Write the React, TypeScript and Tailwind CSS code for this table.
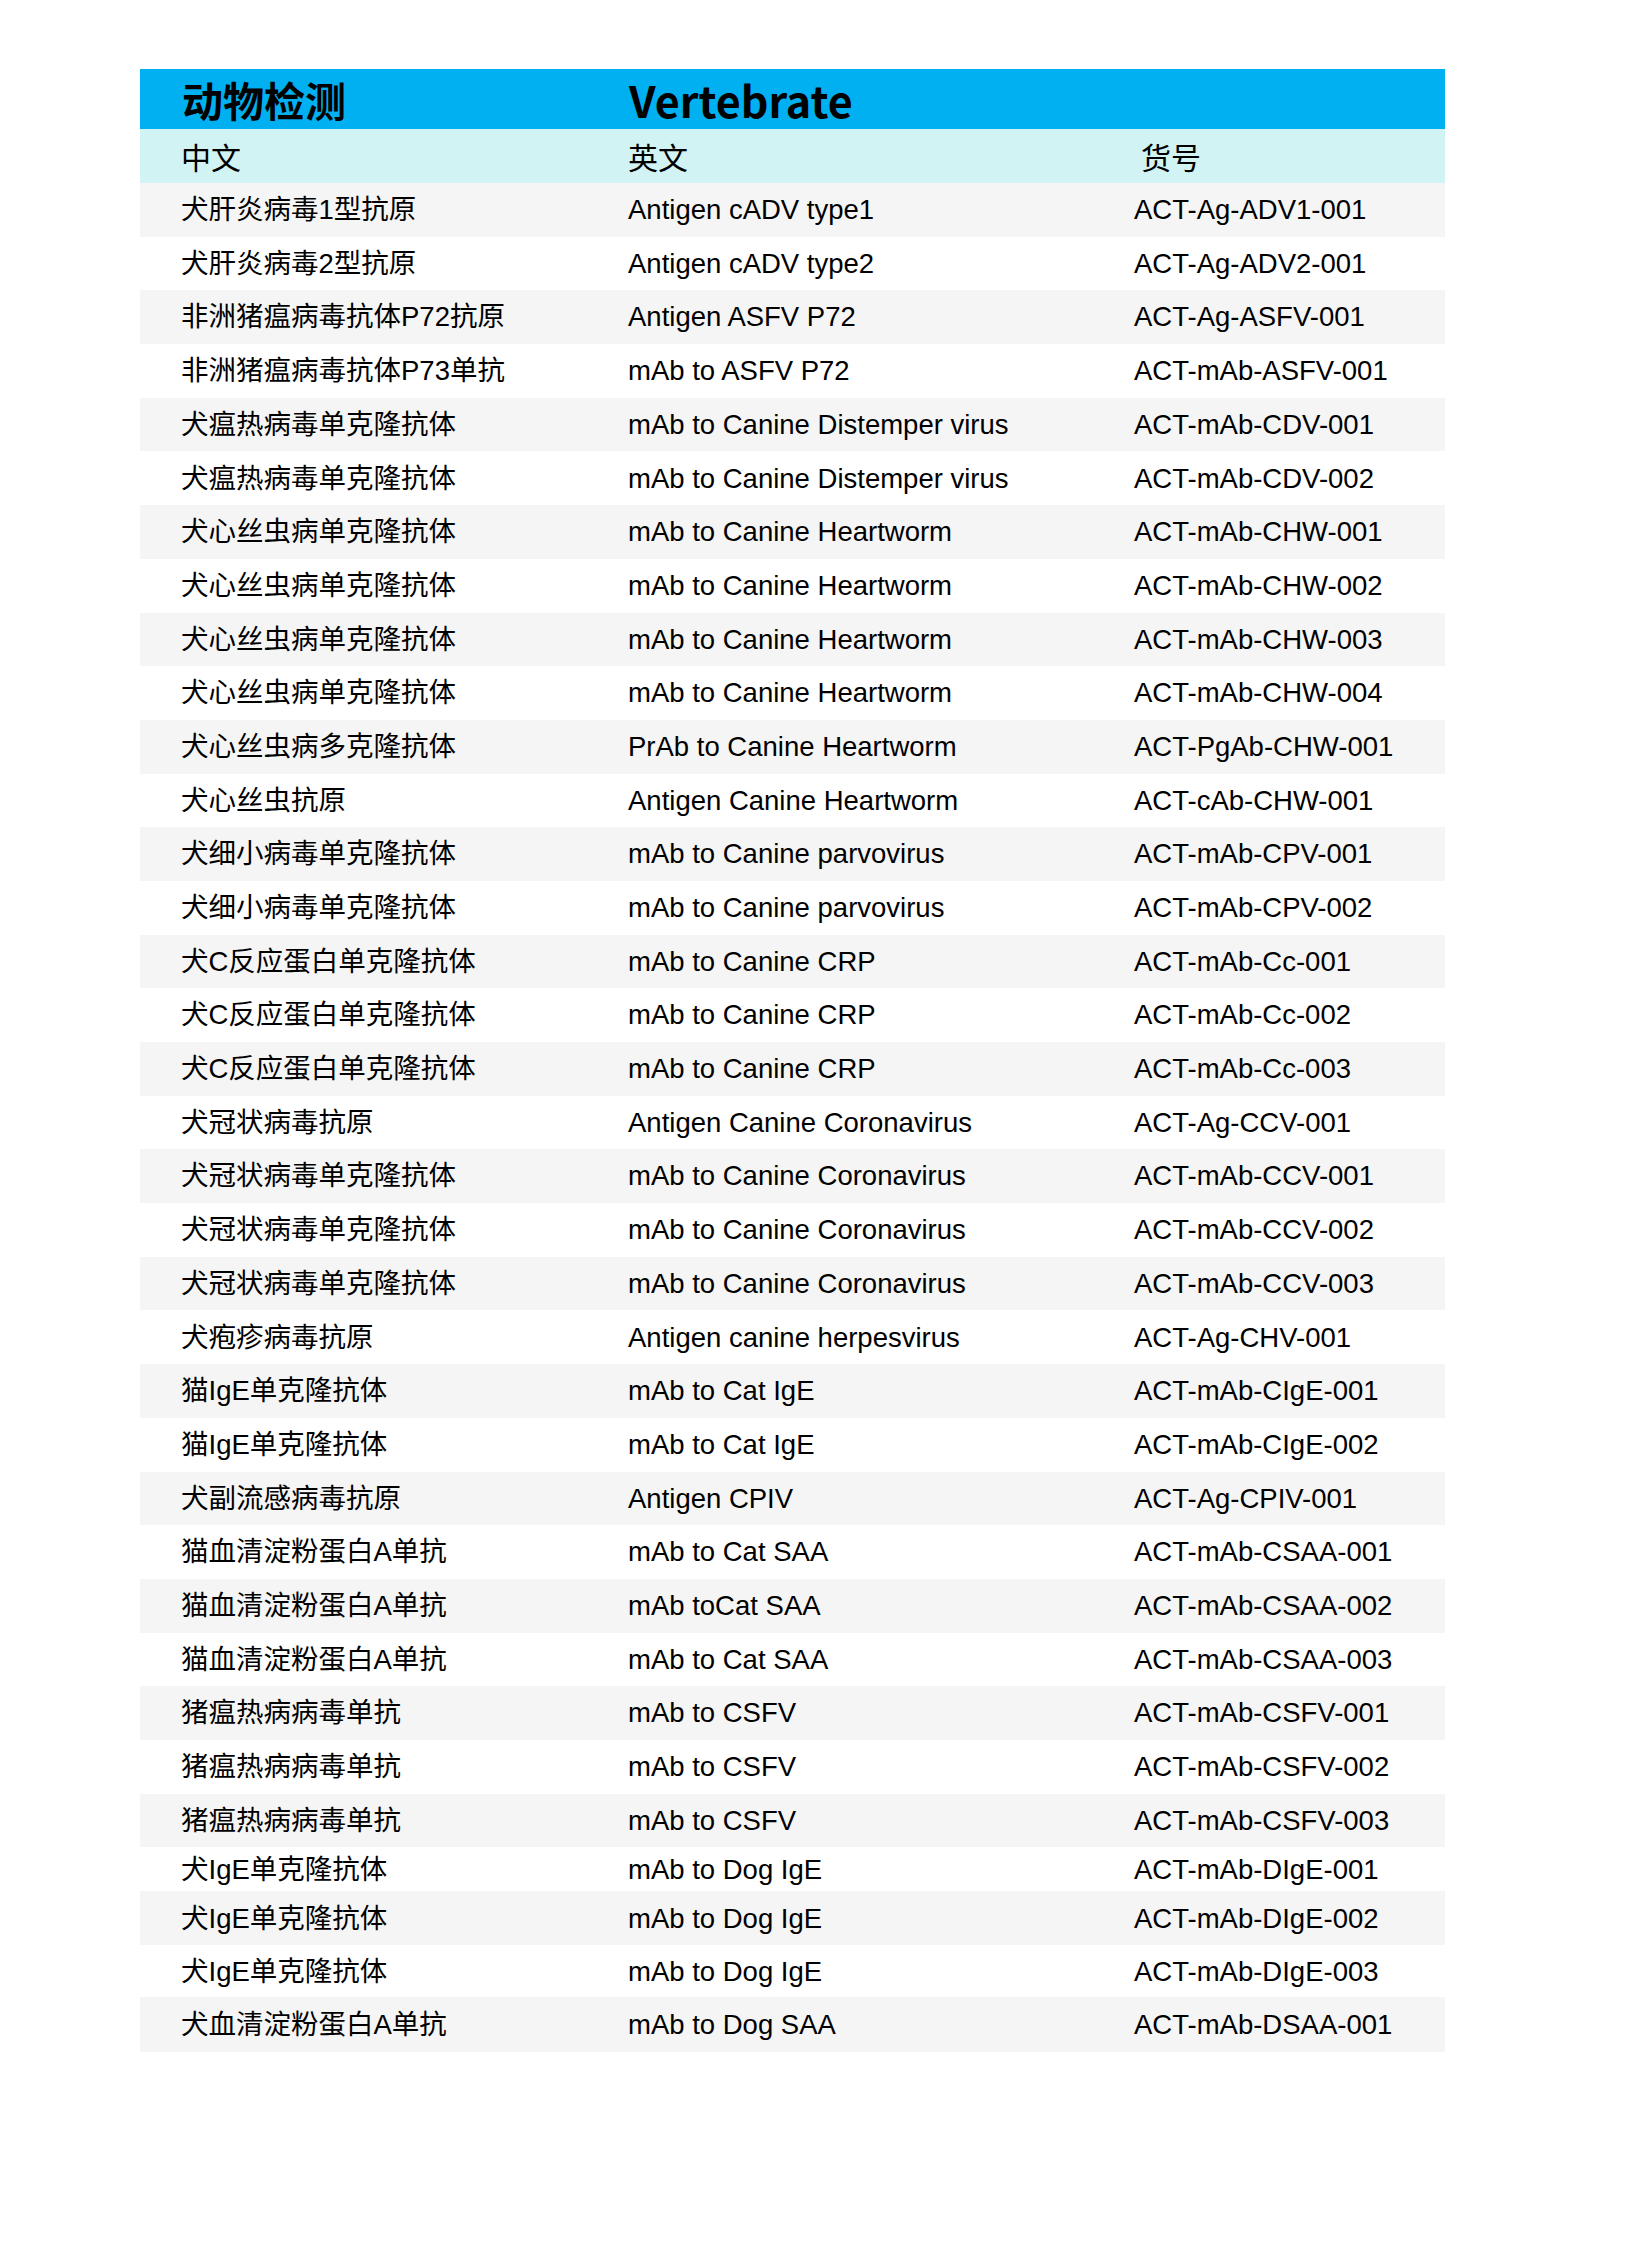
import React from 'react';

type Row = { zh: string; en: string; code: string; h?: string };

const ROWS: Row[] = [
  { zh: '犬肝炎病毒1型抗原', en: 'Antigen cADV type1', code: 'ACT-Ag-ADV1-001' },
  { zh: '犬肝炎病毒2型抗原', en: 'Antigen cADV type2', code: 'ACT-Ag-ADV2-001' },
  { zh: '非洲猪瘟病毒抗体P72抗原', en: 'Antigen ASFV P72', code: 'ACT-Ag-ASFV-001' },
  { zh: '非洲猪瘟病毒抗体P73单抗', en: 'mAb to ASFV P72', code: 'ACT-mAb-ASFV-001' },
  { zh: '犬瘟热病毒单克隆抗体', en: 'mAb to Canine Distemper virus', code: 'ACT-mAb-CDV-001' },
  { zh: '犬瘟热病毒单克隆抗体', en: 'mAb to Canine Distemper virus', code: 'ACT-mAb-CDV-002' },
  { zh: '犬心丝虫病单克隆抗体', en: 'mAb to Canine Heartworm', code: 'ACT-mAb-CHW-001' },
  { zh: '犬心丝虫病单克隆抗体', en: 'mAb to Canine Heartworm', code: 'ACT-mAb-CHW-002' },
  { zh: '犬心丝虫病单克隆抗体', en: 'mAb to Canine Heartworm', code: 'ACT-mAb-CHW-003' },
  { zh: '犬心丝虫病单克隆抗体', en: 'mAb to Canine Heartworm', code: 'ACT-mAb-CHW-004' },
  { zh: '犬心丝虫病多克隆抗体', en: 'PrAb to Canine Heartworm', code: 'ACT-PgAb-CHW-001' },
  { zh: '犬心丝虫抗原', en: 'Antigen Canine Heartworm', code: 'ACT-cAb-CHW-001' },
  { zh: '犬细小病毒单克隆抗体', en: 'mAb to Canine parvovirus', code: 'ACT-mAb-CPV-001' },
  { zh: '犬细小病毒单克隆抗体', en: 'mAb to Canine parvovirus', code: 'ACT-mAb-CPV-002' },
  { zh: '犬C反应蛋白单克隆抗体', en: 'mAb to Canine CRP', code: 'ACT-mAb-Cc-001' },
  { zh: '犬C反应蛋白单克隆抗体', en: 'mAb to Canine CRP', code: 'ACT-mAb-Cc-002' },
  { zh: '犬C反应蛋白单克隆抗体', en: 'mAb to Canine CRP', code: 'ACT-mAb-Cc-003' },
  { zh: '犬冠状病毒抗原', en: 'Antigen Canine Coronavirus', code: 'ACT-Ag-CCV-001' },
  { zh: '犬冠状病毒单克隆抗体', en: 'mAb to Canine Coronavirus', code: 'ACT-mAb-CCV-001' },
  { zh: '犬冠状病毒单克隆抗体', en: 'mAb to Canine Coronavirus', code: 'ACT-mAb-CCV-002' },
  { zh: '犬冠状病毒单克隆抗体', en: 'mAb to Canine Coronavirus', code: 'ACT-mAb-CCV-003' },
  { zh: '犬疱疹病毒抗原', en: 'Antigen canine herpesvirus', code: 'ACT-Ag-CHV-001' },
  { zh: '猫IgE单克隆抗体', en: 'mAb to Cat IgE', code: 'ACT-mAb-CIgE-001' },
  { zh: '猫IgE单克隆抗体', en: 'mAb to Cat IgE', code: 'ACT-mAb-CIgE-002' },
  { zh: '犬副流感病毒抗原', en: 'Antigen CPIV', code: 'ACT-Ag-CPIV-001' },
  { zh: '猫血清淀粉蛋白A单抗', en: 'mAb to Cat SAA', code: 'ACT-mAb-CSAA-001' },
  { zh: '猫血清淀粉蛋白A单抗', en: 'mAb toCat SAA', code: 'ACT-mAb-CSAA-002' },
  { zh: '猫血清淀粉蛋白A单抗', en: 'mAb to Cat SAA', code: 'ACT-mAb-CSAA-003' },
  { zh: '猪瘟热病病毒单抗', en: 'mAb to CSFV', code: 'ACT-mAb-CSFV-001' },
  { zh: '猪瘟热病病毒单抗', en: 'mAb to CSFV', code: 'ACT-mAb-CSFV-002' },
  { zh: '猪瘟热病病毒单抗', en: 'mAb to CSFV', code: 'ACT-mAb-CSFV-003' },
  { zh: '犬IgE单克隆抗体', en: 'mAb to Dog IgE', code: 'ACT-mAb-DIgE-001', h: 'h-[44px]' },
  { zh: '犬IgE单克隆抗体', en: 'mAb to Dog IgE', code: 'ACT-mAb-DIgE-002', h: 'h-[54px]' },
  { zh: '犬IgE单克隆抗体', en: 'mAb to Dog IgE', code: 'ACT-mAb-DIgE-003', h: 'h-[52px]' },
  { zh: '犬血清淀粉蛋白A单抗', en: 'mAb to Dog SAA', code: 'ACT-mAb-DSAA-001', h: 'h-[55px]' },
];

const App: React.FC = () => {
  return (
    <div className="min-h-[2254px] w-full bg-white pt-[69px] text-black font-['Liberation_Sans','Noto_Sans_CJK_SC',sans-serif]">
      <div className="ml-[140px] w-[1305px]">
        {/* Title bar */}
        <div className="grid h-[60px] grid-cols-[447px_506px_1fr] items-center bg-[#00b0f0] pl-[42px] font-['Noto_Sans_CJK_SC',sans-serif] font-bold">
          <span className="text-[41px] leading-none">动物检测</span>
          <span className="text-[43px] leading-none">Vertebrate</span>
          <span />
        </div>

        {/* Column heads */}
        <div className="grid h-[54px] grid-cols-[447px_506px_1fr] items-center bg-[#d2f3f3] pl-[41px] font-['Noto_Sans_CJK_SC',sans-serif] text-[30px] leading-none">
          <span>中文</span>
          <span>英文</span>
          <span className="pl-[7px]">货号</span>
        </div>

        {ROWS.map((r, i) => (
          <div
            key={i}
            className={`grid grid-cols-[447px_506px_1fr] items-center pl-[41px] leading-none ${r.h ?? 'h-[53.7px]'} ${
              i % 2 === 0 ? 'bg-[#f5f5f5]' : 'bg-white'
            }`}
          >
            <span className="whitespace-nowrap text-[27.5px]">{r.zh}</span>
            <span className="whitespace-nowrap text-[27.5px]">{r.en}</span>
            <span className="whitespace-nowrap text-[27.5px]">{r.code}</span>
          </div>
        ))}
      </div>
    </div>
  );
};

export default App;
